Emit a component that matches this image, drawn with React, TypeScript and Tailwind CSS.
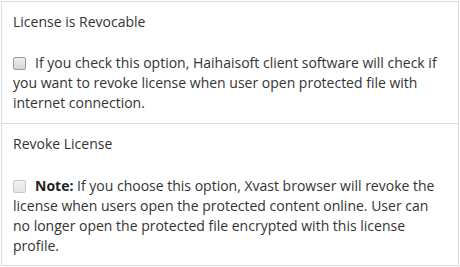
function Box({ disabled }: { disabled?: boolean }) {
  return (
    <input
      type="checkbox"
      disabled={disabled}
      className={
        'appearance-none inline-block align-[-2px] w-[13px] h-[13px] mr-[9px] rounded-[2px] border ' +
        (disabled
          ? 'border-[#c8c8c8] bg-gradient-to-b from-[#f4f4f4] to-[#e4e4e4]'
          : 'border-[#9a9a9a] bg-gradient-to-b from-[#f0f0f0] to-[#d6d6d6]')
      }
    />
  );
}

export default function App() {
  return (
    <div className="w-[460px] h-[267px] bg-white font-['Open_Sans',sans-serif] text-[14px] leading-[20px] text-[#333]">
      <div className="w-[458px] border border-[#ddd] ml-px mt-px">
        <section className="px-[11px] pt-[10px] pb-[10px] border-b border-[#ddd]">
          <div>License is Revocable</div>
          <p className="mt-[21px]">
            <Box />
            If you check this option, Haihaisoft client software will check if you want to revoke
            license when user open protected file with internet connection.
          </p>
        </section>
        <section className="px-[11px] pt-[10px] pb-[9px]">
          <div>Revoke License</div>
          <p className="mt-[22px]">
            <Box disabled />
            <strong className="font-bold text-[#222]">Note:</strong> If you choose this option, Xvast
            browser will revoke the license when users open the protected content online. User can
            no longer open the protected file encrypted with this license profile.
          </p>
        </section>
      </div>
    </div>
  );
}
